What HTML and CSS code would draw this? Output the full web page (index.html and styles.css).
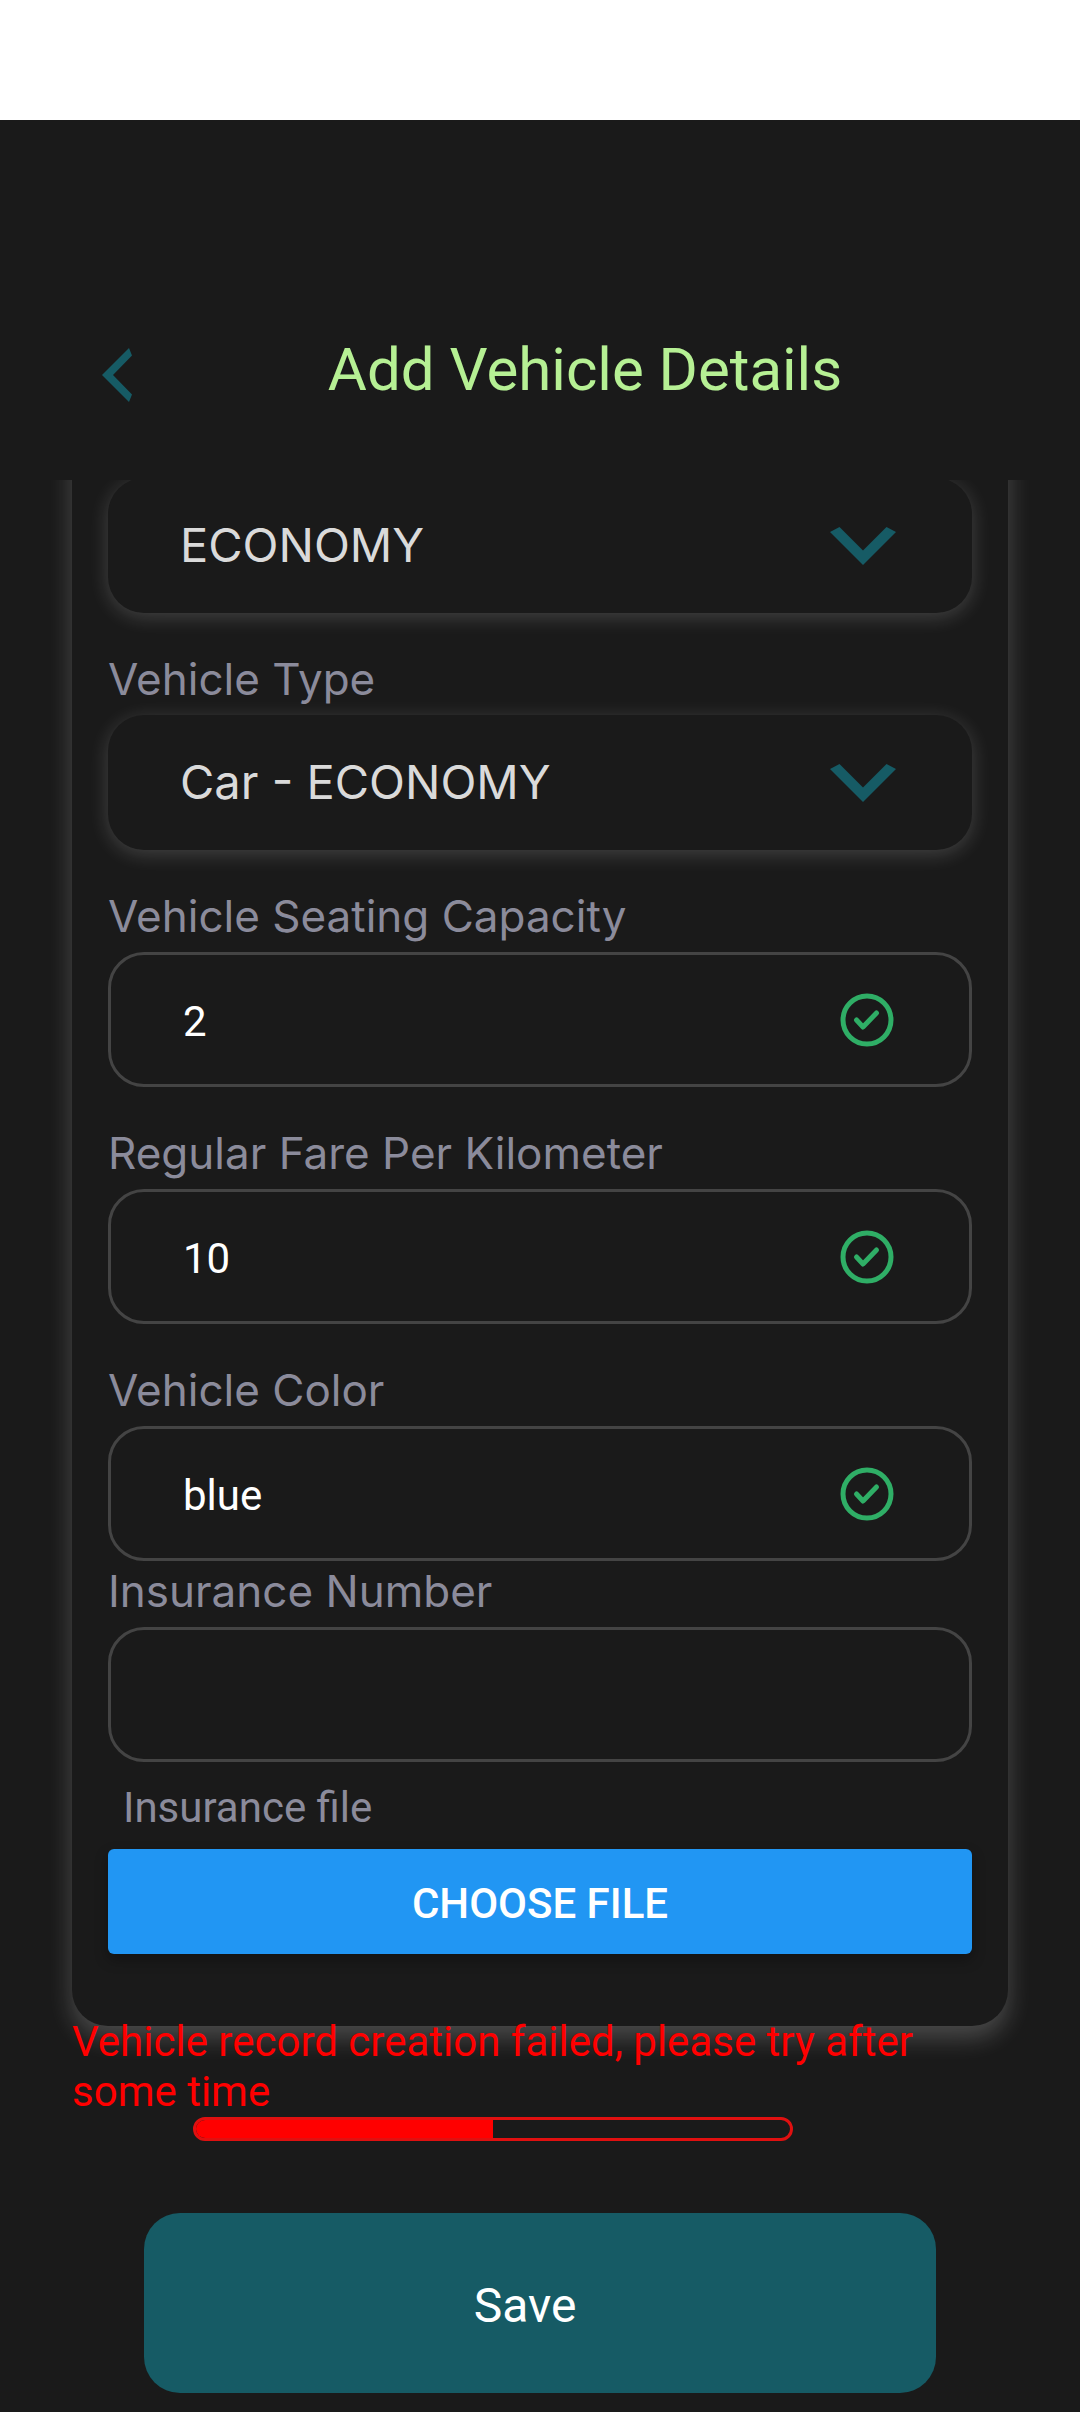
FILE: index.html
```html
<!DOCTYPE html>
<html lang="en">
<head>
<meta charset="utf-8">
<meta name="viewport" content="width=device-width, initial-scale=1">
<title>Add Vehicle Details</title>
<link rel="stylesheet" href="styles.css">
</head>
<body>
<svg class="sprite" aria-hidden="true">
  <symbol id="check" viewBox="0 0 54 54">
    <circle cx="27" cy="27" r="24" fill="none" stroke="currentColor" stroke-width="5"/>
    <path d="M16.5 27L23 34L36.500 20" fill="none" stroke="currentColor" stroke-width="5" stroke-linecap="round" stroke-linejoin="round"/>
  </symbol>
  <symbol id="down" viewBox="0 0 66 38">
    <path d="M0 5L9.500 0L33 23.500L56.500 0L66 5L33 38Z" fill="currentColor"/>
  </symbol>
</svg>
<div class="status-bar"></div>
<header class="header">
  <button class="back" type="button" aria-label="Back">
    <svg width="30" height="54" viewBox="0 0 30 54"><path d="M0 27L27 0L30 7.500L11 27L30 46.500L27 54Z" fill="currentColor"/></svg>
  </button>
  <h1 class="title">Add Vehicle Details</h1>
</header>
<main class="content">
  <form>
    <div class="card">
      <div class="field">
        <div class="control">
          <select class="box select" aria-label="Category"><option>ECONOMY</option></select>
          <svg class="mark arrow"><use href="#down"/></svg>
        </div>
      </div>
      <div class="field">
        <label class="label" for="type">Vehicle Type</label>
        <div class="control">
          <select class="box select" id="type"><option>Car - ECONOMY</option></select>
          <svg class="mark arrow"><use href="#down"/></svg>
        </div>
      </div>
      <div class="field">
        <label class="label" for="seats">Vehicle Seating Capacity</label>
        <div class="control">
          <input class="box input" id="seats" type="text" inputmode="numeric" value="2">
          <svg class="mark check"><use href="#check"/></svg>
        </div>
      </div>
      <div class="field">
        <label class="label" for="fare">Regular Fare Per Kilometer</label>
        <div class="control">
          <input class="box input" id="fare" type="text" inputmode="decimal" value="10">
          <svg class="mark check"><use href="#check"/></svg>
        </div>
      </div>
      <div class="field tight">
        <label class="label" for="color">Vehicle Color</label>
        <div class="control">
          <input class="box input" id="color" type="text" value="blue">
          <svg class="mark check"><use href="#check"/></svg>
        </div>
      </div>
      <div class="field tight">
        <label class="label" for="insurance">Insurance Number</label>
        <div class="control">
          <input class="box input" id="insurance" type="text">
        </div>
      </div>
      <label class="file-label" for="file">Insurance file</label>
      <button class="choose" id="file" type="button">CHOOSE FILE</button>
    </div>
    <p class="error" role="alert">Vehicle record creation failed, please try after some time</p>
    <progress class="progress" value="50" max="100" aria-label="Progress"></progress>
    <button class="save" type="submit">Save</button>
  </form>
</main>
</body>
</html>
```
FILE: styles.css
```css
:root {
  --bg: #1a1a1a;
  --teal: #165b65;
  --muted: #8b8b9b;
}

* {
  box-sizing: border-box;
}

body {
  margin: 0;
  min-height: 100vh;
  background: var(--bg);
  color: #fff;
  font-family: Roboto, sans-serif;
  font-size: 42px;
}

button,
input,
select {
  font: inherit;
  color: inherit;
}

.sprite {
  display: none;
}

.status-bar {
  height: 120px;
  background: #fff;
}

.header {
  display: flex;
  align-items: flex-start;
  height: 360px;
  padding: 214px 72px 0;
}

.back {
  display: flex;
  align-items: center;
  justify-content: center;
  width: 90px;
  height: 82px;
  padding: 0;
  border: 0;
  background: none;
  color: var(--teal);
}

.title {
  flex: 1;
  margin: 0;
  color: #b6f094;
  font-size: 60px;
  font-weight: 400;
  line-height: 72px;
  text-align: center;
}

.content {
  overflow: hidden;
  padding: 0 72px 19px;
}

/* The form is scrolled: the top of the card lies above the visible area. */
.card {
  margin-top: -102px;
  padding: 100px 36px 72px;
  border-radius: 36px;
  background: var(--bg);
  box-shadow: 0 12px 24px rgba(255, 255, 255, 0.21);
}

.field {
  margin-bottom: 36px;
}

.field.tight {
  margin-bottom: 0;
}

.label {
  display: block;
  padding-bottom: 6px;
  color: var(--muted);
  font-family: Inter, sans-serif;
  font-size: 44px;
  line-height: 60px;
}

.control {
  position: relative;
}

.box {
  display: block;
  width: 100%;
  height: 135px;
  margin: 0;
  border-radius: 36px;
  background: var(--bg);
  outline: 0;
}

.input {
  padding: 3px 140px 0 72px;
  border: 3px solid #444;
}

.select {
  appearance: none;
  padding: 0 140px 2px 72px;
  border: 0;
  color: #dadada;
  font-family: Inter, sans-serif;
  font-size: 47px;
  box-shadow: 0 4px 20px rgba(255, 255, 255, 0.18);
}

.mark {
  position: absolute;
  right: 78px;
  top: 0;
  bottom: 0;
  margin: auto 0;
  pointer-events: none;
}

.arrow {
  right: 76px;
  width: 66px;
  height: 38px;
  color: var(--teal);
}

.check {
  width: 54px;
  height: 54px;
  color: #2fae66;
}

.file-label {
  display: block;
  padding: 21px 15px 16px;
  color: var(--muted);
  line-height: 50px;
}

.choose {
  display: block;
  width: 100%;
  height: 105px;
  padding: 3px 0 0;
  border: 0;
  border-radius: 6px;
  background: #2196f3;
  font-weight: 500;
  box-shadow: 0 6px 14px rgba(0, 0, 0, 0.3);
}

.error {
  position: relative;
  margin: -9px 0 0;
  color: #f00;
  line-height: 50px;
}

.progress {
  appearance: none;
  display: block;
  width: 600px;
  max-width: 80%;
  height: 24px;
  margin: 0 0 72px 121px;
  border: 3px solid #e01010;
  border-radius: 12px;
  background: none;
  overflow: hidden;
}

.progress::-webkit-progress-bar {
  background: none;
}

.progress::-webkit-progress-value {
  background: #f00;
}

.progress::-moz-progress-bar {
  background: #f00;
}

.save {
  display: block;
  width: calc(100% - 144px);
  height: 180px;
  margin: 0 auto;
  padding: 4px 30px 0 0;
  border: 0;
  border-radius: 36px;
  background: var(--teal);
  font-size: 48px;
}
```
